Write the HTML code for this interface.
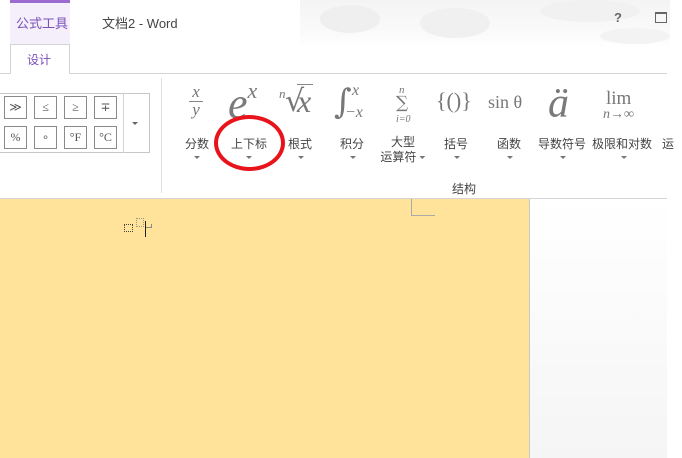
<!DOCTYPE html>
<html><head><meta charset="utf-8"><style>
*{margin:0;padding:0;box-sizing:border-box}
body{width:682px;height:458px;overflow:hidden;background:#fff;position:relative;font-family:"Liberation Sans","Noto Sans CJK SC",sans-serif;color:#444}
.a{position:absolute}
.cjk{font-family:"Liberation Sans","Noto Sans CJK SC",sans-serif;font-size:12px;color:#444;white-space:nowrap}
.ser{font-family:"Liberation Serif","DejaVu Serif",serif;font-style:italic;color:#777}
.cell{position:absolute;width:23px;height:23px;border:1px solid #8a8a8a;background:#fff;font-size:12px;color:#555;text-align:center;line-height:21px;font-family:"Liberation Serif",serif}
.lab{position:absolute;top:135px;font-size:12px;color:#444;transform:translateX(-50%);white-space:nowrap;font-family:"Liberation Sans","Noto Sans CJK SC",sans-serif}
.arr{position:absolute;top:156px;width:0;height:0;border-left:3px solid transparent;border-right:3px solid transparent;border-top:3px solid #777;transform:translateX(-50%)}
</style></head><body>
<!-- title bar clouds -->
<div class="a" style="left:300px;top:0;width:370px;height:48px;background:linear-gradient(180deg,#f4f4f4,#fafafa 70%,#fff)"></div>
<div class="a" style="left:320px;top:5px;width:60px;height:28px;border-radius:50%;background:#efefef"></div>
<div class="a" style="left:420px;top:8px;width:70px;height:30px;border-radius:50%;background:#f0f0f0"></div>
<div class="a" style="left:540px;top:0px;width:100px;height:22px;border-radius:50%;background:#f1f1f1"></div>
<div class="a" style="left:600px;top:28px;width:70px;height:16px;border-radius:50%;background:#f3f3f3"></div>
<div class="a" style="left:10px;top:0;width:60px;height:3px;background:#9b6bd0"></div>
<div class="a" style="left:10px;top:3px;width:60px;height:41px;background:#f4effa"></div>
<div class="a cjk" style="left:16px;top:13px;color:#7a4fb8;font-size:13px">公式工具</div>
<div class="a cjk" style="left:102px;top:13px;font-size:13px;color:#444">文档2 - Word</div>
<div class="a" style="left:614px;top:10px;font-size:13px;font-weight:bold;color:#666">?</div>
<div class="a" style="left:655px;top:12px;width:12px;height:11px;border:1px solid #666;border-top-width:2px"></div>
<!-- tab -->
<div class="a" style="left:0;top:73px;width:667px;height:1px;background:#d4d4d4"></div>
<div class="a" style="left:10px;top:44px;width:60px;height:30px;border:1px solid #d4d4d4;border-bottom:none;background:#fff"></div>
<div class="a cjk" style="left:27px;top:51px;color:#7a4fb8">设计</div>
<!-- symbols gallery -->
<div class="a" style="left:0;top:93px;width:150px;height:60px;border:1px solid #c6c6c6;border-left:none;background:#fff"></div>
<div class="a" style="left:123px;top:93px;width:1px;height:60px;background:#d4d4d4"></div>
<div class="a" style="left:132px;top:122px;border-left:3px solid transparent;border-right:3px solid transparent;border-top:3px solid #666"></div>
<div class="cell" style="left:4px;top:96px">≫</div>
<div class="cell" style="left:34px;top:96px">≤</div>
<div class="cell" style="left:64px;top:96px">≥</div>
<div class="cell" style="left:94px;top:96px">∓</div>
<div class="cell" style="left:4px;top:126px">%</div>
<div class="cell" style="left:34px;top:126px">∘</div>
<div class="cell" style="left:64px;top:126px">°F</div>
<div class="cell" style="left:94px;top:126px">°C</div>
<div class="a" style="left:161px;top:78px;width:1px;height:115px;background:#e0e0e0"></div>
<!-- equation icons -->
<div class="a ser" style="left:189px;top:84px;font-size:17px;line-height:16px;text-align:center;width:14px">x<div style="border-top:1px solid #888;margin-top:1px">y</div></div>
<div class="a ser" style="left:228px;top:66px;font-size:44px;line-height:50px;color:#7a7a7a">e<span style="font-size:22px;vertical-align:20px">x</span></div>
<div class="a ser" style="left:279px;top:86px;font-size:13px">n</div>
<div class="a" style="left:285px;top:84px;font-size:30px;color:#777;font-family:'DejaVu Serif',serif">√</div>
<div class="a ser" style="left:297px;top:84px;font-size:32px;color:#777;border-top:1px solid #888;line-height:32px;padding-right:2px">x</div>
<div class="a" style="left:334px;top:82px;font-size:34px;color:#777;font-family:'DejaVu Serif',serif">∫</div>
<div class="a ser" style="left:352px;top:82px;font-size:16px">x</div>
<div class="a ser" style="left:345px;top:104px;font-size:16px">−x</div>
<div class="a ser" style="left:399px;top:84px;font-size:11px">n</div>
<div class="a" style="left:396px;top:93px;font-size:17px;color:#777;font-family:'DejaVu Serif',serif">∑</div>
<div class="a ser" style="left:396px;top:114px;font-size:10px">i=0</div>
<div class="a" style="left:436px;top:88px;font-size:22px;color:#777;font-family:'Liberation Serif',serif">{()}</div>
<div class="a" style="left:488px;top:92px;font-size:18px;color:#777;font-family:'Liberation Serif',serif">sin θ</div>
<div class="a ser" style="left:548px;top:82px;font-size:42px;line-height:44px;color:#7a7a7a">ä</div>
<div class="a" style="left:606px;top:88px;font-size:19px;color:#777;font-family:'Liberation Serif',serif">lim</div>
<div class="a ser" style="left:603px;top:107px;font-size:14px">n→∞</div>
<!-- labels -->
<div class="lab" style="left:197px">分数</div><div class="arr" style="left:197px"></div>
<div class="lab" style="left:249px">上下标</div><div class="arr" style="left:249px"></div>
<div class="lab" style="left:300px">根式</div><div class="arr" style="left:301px"></div>
<div class="lab" style="left:352px">积分</div><div class="arr" style="left:353px"></div>
<div class="lab" style="left:403px;text-align:center;line-height:15px">大型<br>运算符 <span style="display:inline-block;border-left:3px solid transparent;border-right:3px solid transparent;border-top:3px solid #777;vertical-align:middle"></span></div>
<div class="lab" style="left:456px">括号</div><div class="arr" style="left:457px"></div>
<div class="lab" style="left:509px">函数</div><div class="arr" style="left:510px"></div>
<div class="lab" style="left:562px">导数符号</div><div class="arr" style="left:563px"></div>
<div class="lab" style="left:622px">极限和对数</div><div class="arr" style="left:624px"></div>
<div class="lab" style="left:668px">运</div>
<div class="a cjk" style="left:452px;top:180px;font-size:12px">结构</div>
<!-- red ellipse -->
<div class="a" style="left:214px;top:115px;width:71px;height:56px;border:4px solid #e8141c;border-radius:50%"></div>
<!-- document -->
<div class="a" style="left:0;top:198px;width:667px;height:1px;background:#d4d4d4"></div>
<div class="a" style="left:0;top:199px;width:529px;height:259px;background:#ffe39b"></div>
<div class="a" style="left:529px;top:199px;width:1px;height:259px;background:#c8c8c8"></div>
<div class="a" style="left:530px;top:199px;width:137px;height:259px;background:linear-gradient(180deg,#fff,#f5f5f5)"></div>
<div class="a" style="left:411px;top:199px;width:24px;height:17px;border-left:1px solid #aaa;border-bottom:1px solid #aaa"></div>
<div class="a" style="left:124px;top:224px;width:9px;height:8px;border:1px dotted #444"></div>
<div class="a" style="left:136px;top:218px;width:8px;height:9px;border:1px dotted #998"></div>
<div class="a" style="left:145px;top:221px;width:1px;height:16px;background:#222"></div>
<div class="a" style="left:146px;top:227px;width:5px;height:1px;background:#888"></div>
<div class="a" style="left:151px;top:224px;width:1px;height:4px;background:#888"></div>
</body></html>
